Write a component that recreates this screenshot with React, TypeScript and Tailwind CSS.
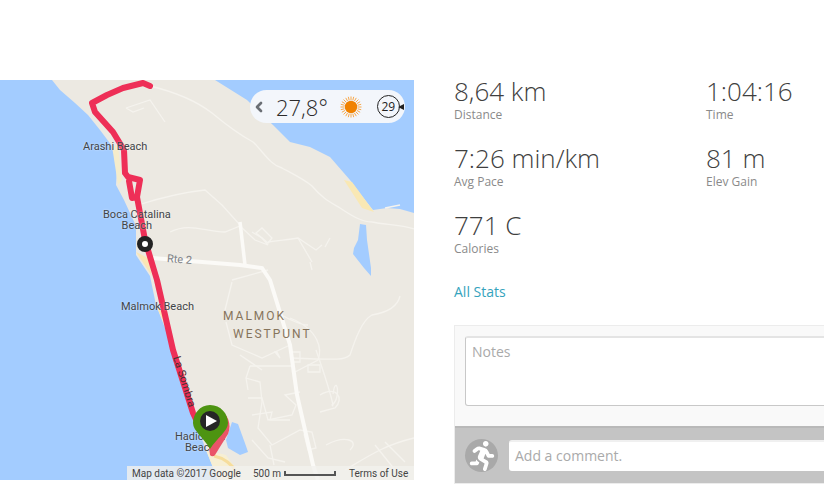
import { ChevronLeft } from "lucide-react";
import { FaRunning } from "react-icons/fa";

const stats = [
  { value: "8,64 km", label: "Distance" },
  { value: "1:04:16", label: "Time" },
  { value: "7:26 min/km", label: "Avg Pace" },
  { value: "81 m", label: "Elev Gain" },
  { value: "771 C", label: "Calories" },
];

const minorRoads = [
  "M150 86 C175 92 195 100 212 113 C230 128 240 135 253 142 C262 150 270 165 282 168 C295 175 305 180 312 186 C322 198 330 202 340 208 C352 216 362 222 372 222 C385 225 400 224 414 229",
  "M126 108 L150 100 L165 122 M126 108 L133 112 L144 108",
  "M138 205 C160 198 185 192 205 190 L222 205 L240 225",
  "M400 205 L385 208",
  "M170 232 C190 222 205 232 225 232 L240 226 L255 240 L268 245 L262 238 L252 232",
  "M256 233 L268 243 L272 238 L262 228 Z",
  "M268 242 C280 240 288 240 298 238 L316 250 L322 245",
  "M298 238 L312 262 M325 247 L330 238 M310 262 L312 270",
  "M232 280 L268 270 M232 282 L225 310 M226 322 L232 345 L262 358 L290 345",
  "M290 318 C320 330 322 350 318 360 L295 372 M278 313 C290 320 300 325 308 325",
  "M290 358 C340 360 345 360 350 355 C355 340 362 320 372 315 C390 312 398 305 400 296",
  "M275 352 L280 358 L277 352 Z M292 352 L300 352 L300 362 L292 362 Z",
  "M308 365 L320 365 L320 372 L308 372 Z",
  "M250 366 L292 366 M250 366 L246 378 L260 382 L262 402 M246 378 L248 390",
  "M248 398 L262 398 L268 420 L292 415 L296 405 L285 395 L300 392",
  "M252 415 L272 412 L270 420 L290 420",
  "M262 402 L258 428 L272 445 L300 430 L312 432 L316 448 L308 450 L304 434",
  "M316 350 C330 390 335 410 332 405 C342 398 336 372 333 394",
  "M320 395 C336 385 345 398 335 408 L320 412",
  "M270 445 L274 465 M252 440 L268 458 L285 462",
  "M326 445 C345 435 360 440 350 450",
  "M345 470 C370 455 385 445 414 438 M375 445 L395 470 M385 442 L405 462",
  "M240 355 L262 370",
];

const route =
  "M150 86 L143 83 L123 88 L107 95 L92 103 L95 112 L113 132 L124 150 L125 173 L128 177 L140 180 L137 197 L132 198 L129 181 M137 197 L145 240 L157 280 L173 350 L193 413 L200 428";

const rays = Array.from({ length: 24 }, (_, i) => (i * Math.PI) / 12);

function MapLabel({
  children,
  className,
}: {
  children: React.ReactNode;
  className: string;
}) {
  return (
    <div
      className={`absolute font-['Roboto',sans-serif] text-[11px] leading-[11px] text-[#3f4447] text-center whitespace-nowrap [text-shadow:0_0_2px_#ffffffaa] ${className}`}
    >
      {children}
    </div>
  );
}

function RouteMap() {
  return (
    <div className="relative w-[414px] h-[400px] shrink-0 bg-[#a3ccff] overflow-hidden">
      <svg
        viewBox="0 80 414 400"
        width="414"
        height="400"
        className="block"
        fill="none"
      >
        {/* land */}
        <path
          d="M52 80 L60 90 L75 103 L88 115 L100 130 L112 146 L117 165 L116 185 L124 200 L136 226 L136 255 L150 276 L156 305 L165 328 L176 352 L192 412 L206 450 L218 480 L414 480 L414 213 L400 209 L387 208 L373 210 L362 196 L350 180 L330 157 L310 147 L290 142 L273 125 L247 100 L215 80 Z"
          fill="#ece9e2"
        />
        {/* beaches */}
        <path d="M344 180 L352 182 L374 212 L362 208 Z" fill="#f9e8b4" />
        <path d="M112 146 L118 146 L122 180 L118 185 Z" fill="#f5eccb" />
        <path d="M136 252 L148 258 L152 276 Z" fill="#fae6b4" />
        <path d="M156 305 L162 312 L166 328 Z" fill="#fae6b4" />
        <path d="M206 450 L226 455 L240 475 L218 480 Z" fill="#f7efd3" />
        <path
          d="M214 456 C224 458 232 464 238 474"
          stroke="#f6dd9c"
          strokeWidth="3"
        />
        {/* lakes */}
        <path
          d="M360 224 L366 225 L367 240 L371 268 L371 276 L364 268 L353 254 L354 248 L358 240 Z"
          fill="#a3ccff"
        />
        <path
          d="M232 422 L238 424 L246 446 L248 452 L240 455 L228 448 L226 440 Z"
          fill="#a3ccff"
        />
        {/* roads */}
        {minorRoads.map((d) => (
          <path key={d} d={d} stroke="#f5f3ee" strokeWidth="1.3" />
        ))}
        <path
          d="M152 258 L240 265 L262 268 L270 280 L290 345 L297 395 L313 465 L318 480"
          stroke="#fbfaf7"
          strokeWidth="4"
        />
        <path d="M240 222 L245 265" stroke="#fbfaf7" strokeWidth="3.5" />
        {/* route */}
        <path
          d={route}
          stroke="#ee2f57"
          strokeWidth="6"
          strokeLinecap="round"
          strokeLinejoin="round"
        />
        <circle cx="145" cy="244" r="5.5" fill="#fff" stroke="#222" strokeWidth="5" />
      </svg>

      <MapLabel className="left-[83px] top-[61px]">Arashi Beach</MapLabel>
      <MapLabel className="left-[103px] top-[129px]">
        Boca Catalina
        <br />
        Beach
      </MapLabel>
      <div className="absolute left-[167px] top-[174px] rotate-[5deg] font-['Roboto',sans-serif] text-[11px] leading-[11px] text-[#7d8186]">
        Rte 2
      </div>
      <MapLabel className="left-[121px] top-[221px]">Malmok Beach</MapLabel>
      <div className="absolute left-[158px] top-[296px] rotate-[72deg] font-['Roboto',sans-serif] text-[11px] leading-[11px] text-[#4a2f33]">
        La Sombra
      </div>
      <MapLabel className="left-[175px] top-[351px]">
        Hadicurari
        <br />
        Beach
      </MapLabel>
      <div className="absolute left-[223px] top-[227px] font-['Roboto',sans-serif] text-[12px] leading-[18px] tracking-[2px] text-[#86745c]">
        MALMOK
        <br />
        <span className="ml-[10px]">WESTPUNT</span>
      </div>

      {/* start pin, over the label */}
      <svg
        viewBox="190 403 44 56"
        width="44"
        height="56"
        className="absolute left-[190px] top-[323px]"
      >
        <path
          d="M218 408 C228 414 232 424 228 434 L215 455 A3 3 0 0 1 210 455 L208 440 Z"
          fill="#ea5468"
        />
        <path
          d="M210 405 C221 405 228 414 228 423 C228 431 217 438 210 449 C204 438 193 431 193 423 C193 414 200 405 210 405 Z"
          fill="#4d9411"
        />
        <circle cx="210" cy="421" r="10" fill="#262626" />
        <path d="M206 415 L217 421 L206 427 Z" fill="#fff" />
      </svg>

      {/* attribution */}
      <div className="absolute left-[127px] right-0 bottom-0 h-[14px] bg-[#f2f1ed]/80 flex items-center font-['Roboto',sans-serif] text-[10px] text-[#444] whitespace-nowrap">
        <span className="ml-[5px]">Map data ©2017 Google</span>
        <span className="ml-[12px]">500 m</span>
        <span className="ml-[3px] w-[52px] h-[5px] border-x-2 border-b-2 border-[#555]" />
        <span className="ml-[13px]">Terms of Use</span>
      </div>

      {/* weather */}
      <div className="absolute left-[250px] top-[10px] w-[155px] h-[33px] rounded-full bg-[#f3f6fb] flex items-center">
        <ChevronLeft
          size={16}
          strokeWidth={4}
          className="ml-[1px] text-[#6b6f75]"
        />
        <span className="ml-[9px] font-['Open_Sans',sans-serif] font-light text-[22px] leading-none text-[#2b2b2b]">
          27,8°
        </span>
        <svg viewBox="0 0 24 24" width="22" height="22" className="ml-[12px]">
          <circle cx="12" cy="12" r="6.8" fill="#f08200" />
          {rays.map((a) => (
            <line
              key={a}
              x1={12 + 7.5 * Math.cos(a)}
              y1={12 + 7.5 * Math.sin(a)}
              x2={12 + 11.5 * Math.cos(a)}
              y2={12 + 11.5 * Math.sin(a)}
              stroke="#f6a13c"
              strokeWidth="1"
            />
          ))}
        </svg>
        <span className="relative ml-[15px] w-[23px] h-[23px] rounded-full border border-[#222] flex items-center justify-center font-['Open_Sans',sans-serif] text-[12px] leading-none text-[#222]">
          29
          <svg
            viewBox="0 0 6 6"
            width="6"
            height="6"
            className="absolute right-[-5px] top-[8px]"
          >
            <path d="M0 3 L6 0 L6 6 Z" fill="#222" />
          </svg>
        </span>
      </div>
    </div>
  );
}

export default function App() {
  return (
    <div className="w-[824px] h-[493px] overflow-hidden bg-white pt-[80px] flex font-['Open_Sans',sans-serif]">
      <RouteMap />
      <div className="ml-[40px] w-[500px] shrink-0">
        <div className="grid grid-cols-[252px_1fr] auto-rows-[67px]">
          {stats.map((s) => (
            <div key={s.label} className="mt-[-4px]">
              <div className="font-light text-[26px] leading-[30px] text-[#3f3f3f]">
                {s.value}
              </div>
              <div className="mt-[2px] text-[12px] leading-[14px] text-[#8a8a8a]">
                {s.label}
              </div>
            </div>
          ))}
        </div>
        <div className="mt-[1px] text-[14px] leading-[20px] text-[#35a3bd]">
          All Stats
        </div>
        <div className="mt-[23px] border border-[#ececec] bg-[#f9f9f9]">
          <div className="px-[10px] pt-[10px] pb-[20px]">
            <div className="h-[70px] rounded-[3px] border border-[#c8c8c8] border-t-2 border-t-[#e4e4e4] bg-white px-[6px] py-[4px] text-[14px] leading-[20px] text-[#aaa]">
              Notes
            </div>
          </div>
          <div className="h-[57px] bg-[#c4c4c4] border-t-2 border-t-[#b9b9b9] flex items-center px-[10px]">
            <div className="w-[33px] h-[33px] rounded-full bg-[#a9a9a9] flex items-center justify-center overflow-hidden">
              <FaRunning size={30} className="text-white" />
            </div>
            <div className="ml-[11px] flex-1 h-[31px] rounded-[3px] bg-white border-t-2 border-t-[#f0f0f0] px-[6px] text-[14px] leading-[28px] text-[#aaa]">
              Add a comment.
            </div>
          </div>
        </div>
      </div>
    </div>
  );
}
